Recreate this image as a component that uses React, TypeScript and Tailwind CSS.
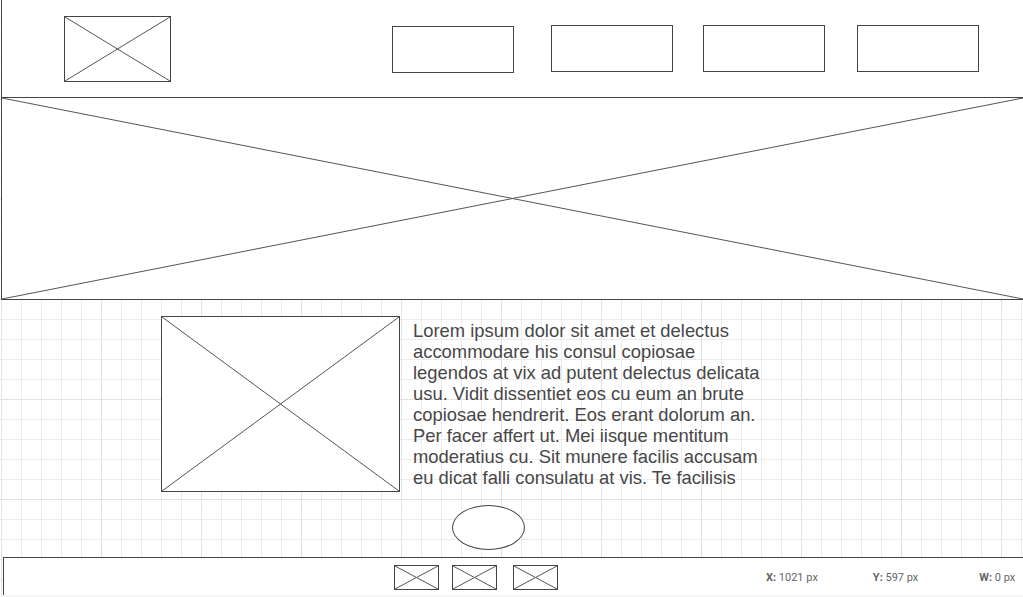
import React from 'react';

function XBox({ className }: { className: string }) {
  return (
    <div className={`relative border border-[#444] ${className}`}>
      <svg className="absolute inset-0 w-full h-full" preserveAspectRatio="none" viewBox="0 0 100 100">
        <line x1="0" y1="0" x2="100" y2="100" stroke="#555" strokeWidth="1" vectorEffect="non-scaling-stroke" />
        <line x1="0" y1="100" x2="100" y2="0" stroke="#555" strokeWidth="1" vectorEffect="non-scaling-stroke" />
      </svg>
    </div>
  );
}

function NavBox({ className }: { className: string }) {
  return <div className={`w-[122px] h-[47px] border border-[#444] bg-white ${className}`} />;
}

const lorem =
  'Lorem ipsum dolor sit amet et delectus accommodare his consul copiosae legendos at vix ad putent delectus delicata usu. Vidit dissentiet eos cu eum an brute copiosae hendrerit. Eos erant dolorum an. Per facer affert ut. Mei iisque mentitum moderatius cu. Sit munere facilis accusam eu dicat falli consulatu at vis. Te facilisis';

export default function App() {
  return (
    <div className="w-[1023px] h-[597px] overflow-hidden flex flex-col bg-white [background-image:linear-gradient(to_right,#e2e2e2_1px,transparent_1px),linear-gradient(to_bottom,#e2e2e2_1px,transparent_1px),linear-gradient(to_right,#ececec_1px,transparent_1px),linear-gradient(to_bottom,#ececec_1px,transparent_1px)] [background-size:100px_100px,100px_100px,20px_20px,20px_20px] [background-position:1px_-1px]">
      {/* header */}
      <header className="h-[97px] shrink-0 ml-px border-l border-[#444] bg-white flex items-start">
        <XBox className="w-[107px] h-[66px] ml-[62px] mt-[16px]" />
        <NavBox className="ml-[221px] mt-[26px]" />
        <NavBox className="ml-[37px] mt-[25px]" />
        <NavBox className="ml-[30px] mt-[25px]" />
        <NavBox className="ml-[32px] mt-[25px]" />
      </header>

      {/* banner */}
      <XBox className="h-[203px] w-[1023px] shrink-0 ml-px bg-white" />

      {/* content */}
      <main className="h-[257px] shrink-0 flex flex-col">
        <div className="flex items-start pt-[16px] pl-[161px]">
          <XBox className="w-[239px] h-[176px] shrink-0 bg-white" />
          <p className="ml-[13px] mt-[4px] w-[354px] text-[18.4px] leading-[21px] text-[#474747] font-['Liberation_Sans',Arial,sans-serif]">
            {lorem}
          </p>
        </div>
        <div className="ml-[452px] mt-[13px] w-[73px] h-[45px] rounded-[50%] border border-[#444] bg-white" />
      </main>

      {/* footer */}
      <footer className="h-[38px] shrink-0 ml-[3px] border-l border-t border-[#444] bg-white flex items-center font-['Roboto','Liberation_Sans',sans-serif] text-[11px] text-[#666]">
        <XBox className="w-[45px] h-[25px] ml-[390px] mt-px" />
        <XBox className="w-[45px] h-[25px] ml-[13px] mt-px" />
        <XBox className="w-[45px] h-[25px] ml-[16px] mt-px" />
        <span className="ml-[208px] mt-[4px]">
          <b className="font-bold">X:</b> 1021 px
        </span>
        <span className="ml-[55px] mt-[4px]">
          <b className="font-bold">Y:</b> 597 px
        </span>
        <span className="ml-[61px] mt-[4px]">
          <b className="font-bold">W:</b> 0 px
        </span>
      </footer>
      <div className="h-[2px] shrink-0 bg-[#f6f6f6]" />
    </div>
  );
}
